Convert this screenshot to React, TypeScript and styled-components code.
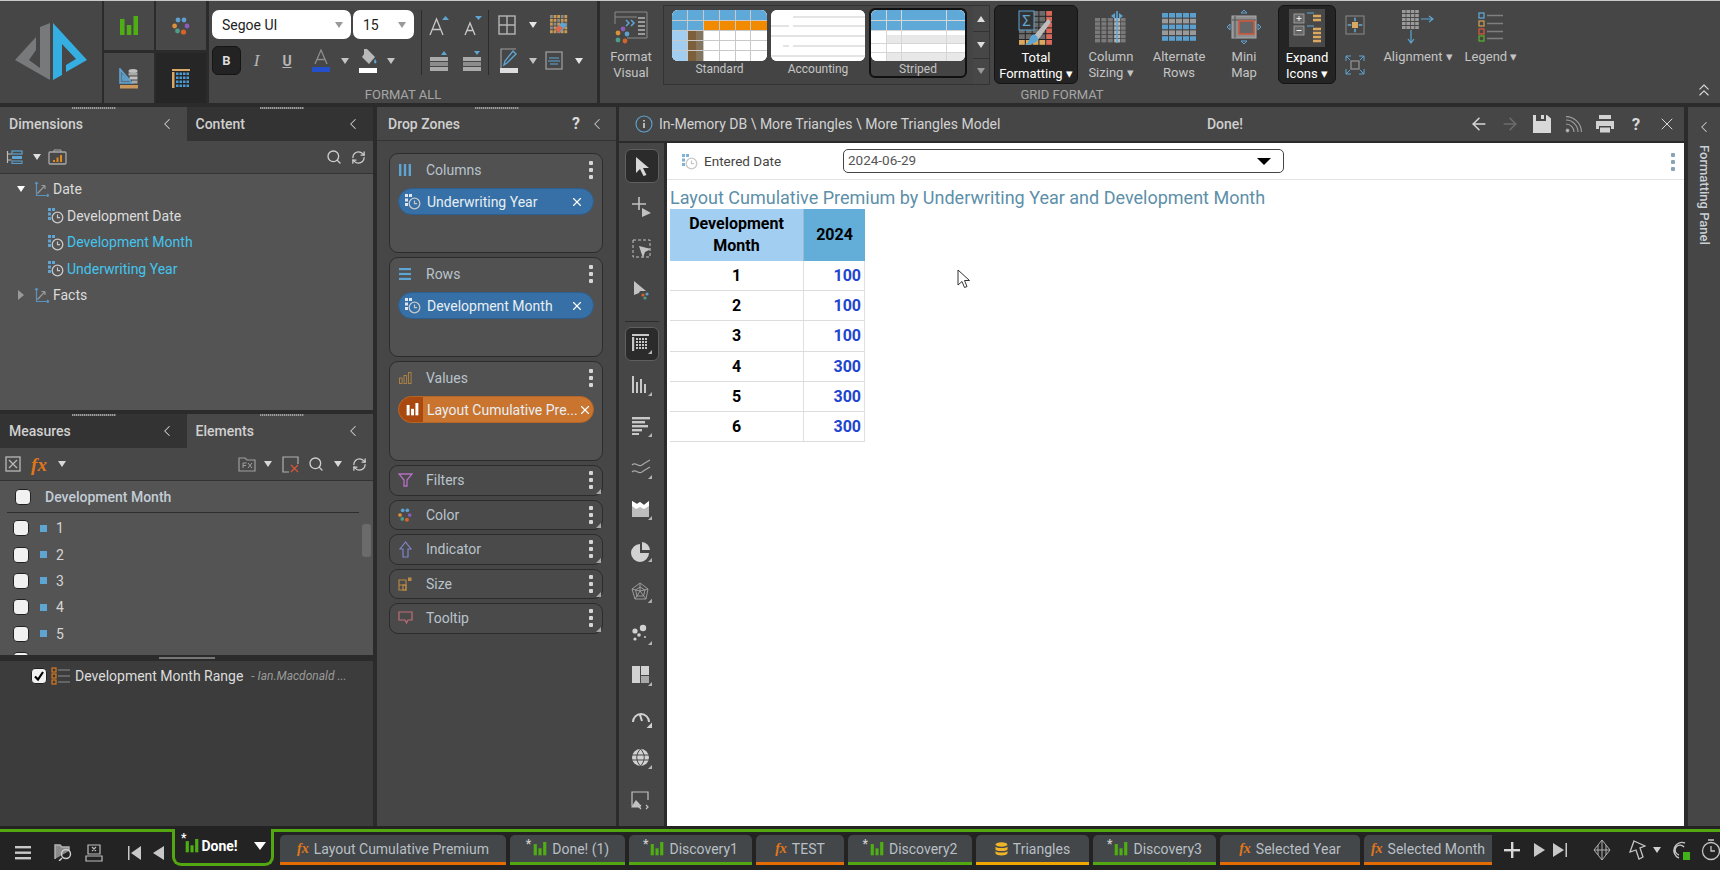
import React from 'react';
import styled, { createGlobalStyle } from 'styled-components';
import { ChevronLeft, ChevronsUp, X, ArrowLeft, ArrowRight, Search, RefreshCw } from 'lucide-react';

const GlobalStyle = createGlobalStyle`
  html, body { margin: 0; padding: 0; background: #2b2b2b; }
  body { font-family: Roboto, "Open Sans", "Liberation Sans", sans-serif; font-size: 14px; color: #ddd; }
  * { box-sizing: border-box; }
  svg { display: block; flex: none; }
`;

const Page = styled.div`
  width: 1720px;
  height: 870px;
  display: flex;
  flex-direction: column;
  overflow: hidden;
  background: #2b2b2b;
  border-top: 1px solid #c9c9c9;
`;

/* ---------- ribbon ---------- */
const Ribbon = styled.div`
  height: 102px;
  display: flex;
  gap: 3px;
  background: #2b2b2b;
  flex: none;
`;
const Logo = styled.div`
  width: 102px;
  background: #464646;
  margin-right: 0;
`;
const TileGrid = styled.div`
  width: 102px;
  display: grid;
  grid-template-columns: 50px 50px;
  grid-template-rows: 49px 50px;
  gap: 3px 2px;
  margin-left: -1px;
`;
const Tile = styled.div<{ $on?: boolean }>`
  background: ${p => (p.$on ? '#262626' : '#484848')};
  display: flex;
  align-items: center;
  justify-content: center;
`;
const Section = styled.div<{ $w?: number }>`
  position: relative;
  background: #464646;
  display: flex;
  flex-direction: column;
  ${p => (p.$w ? `width: ${p.$w}px;` : 'flex: 1;')}
`;
const SectionBody = styled.div`
  height: 85px;
  display: flex;
`;
const SectionLabel = styled.div<{ $w?: number }>`
  font-size: 13px;
  color: #a6a6a6;
  text-align: center;
  line-height: 17px;
  ${p => (p.$w ? `width: ${p.$w}px;` : '')}
`;
const Cluster = styled.div<{ $w: number }>`
  width: ${p => p.$w}px;
  padding-top: 9px;
  display: flex;
  flex-direction: column;
  gap: 7px;
`;
const ClusterRow = styled.div`
  height: 29px;
  display: flex;
  align-items: center;
`;
const VSep = styled.div`
  width: 1px;
  height: 65px;
  margin-top: 9px;
  background: #2c2c2c;
`;
const Cell = styled.div<{ $w: number }>`
  width: ${p => p.$w}px;
  display: flex;
  align-items: center;
  justify-content: center;
  flex: none;
`;
const Combo = styled.div<{ $w: number }>`
  width: ${p => p.$w}px;
  height: 29px;
  background: #fff;
  border-radius: 7px;
  color: #222;
  font-size: 14px;
  display: flex;
  align-items: center;
  justify-content: space-between;
  padding: 0 8px 0 10px;
  margin-right: 2px;
`;
const BoldBtn = styled.div`
  width: 29px;
  height: 29px;
  background: #232323;
  border: 1px solid #151515;
  border-radius: 6px;
  color: #ddd;
  font-weight: 700;
  font-size: 13px;
  display: flex;
  align-items: center;
  justify-content: center;
`;
const Glyph = styled.span<{ $c?: string; $s?: number; $i?: boolean; $u?: boolean }>`
  color: ${p => p.$c || '#b5b5b5'};
  font-size: ${p => p.$s || 15}px;
  font-style: ${p => (p.$i ? 'italic' : 'normal')};
  font-weight: ${p => (p.$u ? 700 : 400)};
  text-decoration: ${p => (p.$u ? 'underline' : 'none')};
  line-height: 1;
`;
const Caret = styled.i<{ $c?: string }>`
  display: block;
  width: 0;
  height: 0;
  border-left: 4px solid transparent;
  border-right: 4px solid transparent;
  border-top: 6px solid ${p => p.$c || '#c4c4c4'};
`;
const RibbonBtn = styled.div<{ $w: number; $on?: boolean }>`
  width: ${p => p.$w}px;
  height: 79px;
  margin-top: 4px;
  display: flex;
  flex-direction: column;
  align-items: center;
  flex: none;
  font-size: 13px;
  line-height: 16px;
  text-align: center;
  color: ${p => (p.$on ? '#fff' : '#c4c4c4')};
  background: ${p => (p.$on ? '#242424' : 'transparent')};
  border-radius: 6px;
  ${p => (p.$on ? 'border: 1px solid #151515;' : '')}
`;
const BtnIcon = styled.div`
  height: 44px;
  display: flex;
  align-items: center;
  justify-content: center;
  flex: none;
`;
const Gallery = styled.div`
  width: 327px;
  height: 80px;
  margin: 4px 4px 0 1px;
  border: 1px solid #333;
  display: flex;
  background: #444;
`;
const GalleryItems = styled.div`
  flex: 1;
  display: flex;
  padding: 2px 4px 0 8px;
  gap: 3px;
`;
const GalleryItem = styled.div<{ $on?: boolean; $w: number }>`
  width: ${p => p.$w}px;
  height: 70px;
  border-radius: 6px;
  display: flex;
  flex-direction: column;
  align-items: center;
  font-size: 12px;
  color: #c4c4c4;
  padding-top: 2px;
  ${p => (p.$on ? 'border: 2px solid #111; padding-top: 0;' : '')}
`;
const ThumbBox = styled.div`
  border-radius: 6px;
  overflow: hidden;
  background: #fff;
  margin-bottom: 1px;
`;
const GalleryScroll = styled.div`
  width: 16px;
  display: flex;
  flex-direction: column;
  gap: 1px;
  background: #333;
`;
const ScrollStep = styled.div`
  flex: 1;
  background: #474747;
  display: flex;
  align-items: center;
  justify-content: center;
`;
const SmallCol = styled.div`
  width: 38px;
  display: flex;
  flex-direction: column;
  align-items: center;
  gap: 20px;
  padding-top: 14px;
`;
const Collapse = styled.div`
  position: absolute;
  right: 6px;
  bottom: 3px;
  color: #d5d5d5;
`;

/* ---------- work area ---------- */
const Work = styled.div`
  height: 719px;
  margin-top: 4px;
  display: flex;
  flex: none;
`;
const LeftCol = styled.div`
  width: 373px;
  display: flex;
  flex-direction: column;
  flex: none;
  margin-right: 4px;
`;
const Panel = styled.div<{ $h: number }>`
  position: relative;
  height: ${p => p.$h}px;
  display: flex;
  flex-direction: column;
  background: #545454;
  flex: none;
`;
const Handle = styled.div<{ $x: number }>`
  position: absolute;
  top: 0;
  left: ${p => p.$x}px;
  width: 44px;
  height: 2px;
  background: repeating-linear-gradient(90deg, #9a9a9a 0 1px, #666 1px 2px);
`;
const Tabs = styled.div`
  height: 34px;
  display: flex;
  flex: none;
`;
const PanelTab = styled.div<{ $on?: boolean }>`
  flex: 1;
  display: flex;
  align-items: center;
  justify-content: space-between;
  padding: 0 11px 0 9px;
  background: ${p => (p.$on ? '#484848' : '#333333')};
  color: #d0d0d0;
  font-size: 14px;
  font-weight: 500;
`;
const ToolRow = styled.div`
  height: 33px;
  display: flex;
  align-items: center;
  background: #484848;
  border-bottom: 1px solid #333;
  padding-right: 2px;
  flex: none;
`;
const Push = styled.div`
  flex: 1;
`;
const Tree = styled.div`
  padding-top: 2px;
`;
const TreeRow = styled.div<{ $blue?: boolean; $child?: boolean }>`
  height: 26.5px;
  display: flex;
  align-items: center;
  font-size: 14px;
  color: ${p => (p.$blue ? '#43c5ee' : '#dcdcdc')};
  padding-left: ${p => (p.$child ? 47 : 16)}px;
  gap: 3px;
`;
const Arrow = styled.div`
  width: 10px;
  margin-right: 5px;
  display: flex;
  justify-content: center;
`;
const RightArrow = styled.i`
  display: block;
  width: 0;
  height: 0;
  border-top: 5px solid transparent;
  border-bottom: 5px solid transparent;
  border-left: 6px solid #9a9a9a;
`;
const Splitter = styled.div`
  position: relative;
  height: 4px;
  flex: none;
`;
const ListHead = styled.div`
  height: 32px;
  margin: 0 14px 0 7px;
  border-bottom: 1px solid #2e2e2e;
  display: flex;
  align-items: center;
  gap: 14px;
  padding-left: 8px;
  font-weight: 500;
  font-size: 14px;
  color: #c3cdd6;
  flex: none;
`;
const ListBody = styled.div`
  position: relative;
  flex: 1;
  overflow: hidden;
  padding-top: 2px;
`;
const ListRow = styled.div`
  height: 26.4px;
  display: flex;
  align-items: center;
  padding-left: 13px;
  color: #d6d6d6;
`;
const Check = styled.div`
  width: 16px;
  height: 16px;
  background: #f1f1f1;
  border: 1px solid #222;
  border-radius: 4px;
  flex: none;
  display: flex;
  align-items: center;
  justify-content: center;
`;
const Member = styled.i`
  display: block;
  width: 7px;
  height: 7px;
  margin: 0 9px 0 11px;
  background: #5ea5d3;
`;
const ScrollThumb = styled.div`
  position: absolute;
  right: 2px;
  top: 11px;
  width: 9px;
  height: 33px;
  background: #6b6b6b;
  border-radius: 3px;
`;
const SplitBar = styled.div`
  position: relative;
  height: 6px;
  background: #2b2b2b;
  flex: none;
  &::after {
    content: '';
    position: absolute;
    left: 159px;
    top: 2px;
    width: 56px;
    height: 2px;
    background: #777;
  }
`;
const SavedPanel = styled.div`
  flex: 1;
  background: #3c3c3c;
  padding: 5px 0 0 31px;
`;
const SavedRow = styled.div`
  height: 20px;
  display: flex;
  align-items: center;
  gap: 4px;
  color: #dcdcdc;
  font-size: 14px;
  white-space: nowrap;
`;
const SavedOwner = styled.span`
  font-style: italic;
  font-size: 12px;
  color: #9a9a9a;
  margin-left: 4px;
`;

const DropPanel = styled.div`
  position: relative;
  width: 239px;
  background: #464646;
  display: flex;
  flex-direction: column;
  flex: none;
  margin-right: 3px;
`;
const DropHead = styled.div`
  height: 34px;
  display: flex;
  align-items: center;
  padding: 0 10px 0 11px;
  border-bottom: 1px solid #333;
  color: #d0d0d0;
  font-weight: 500;
  flex: none;
`;
const DropList = styled.div`
  padding: 12px 13px 0 12px;
  display: flex;
  flex-direction: column;
  gap: 4px;
`;
const DropBox = styled.div<{ $tall?: boolean }>`
  position: relative;
  height: ${p => (p.$tall ? 100 : 30.5)}px;
  background: ${p => (p.$tall ? '#515151' : '#4a4a4a')};
  border: 1px solid #2c2c2c;
  border-radius: 9px;
  padding: ${p => (p.$tall ? '0 8px' : '0')};
  ${p =>
    p.$tall
      ? ''
      : `&::after {
    content: '';
    position: absolute;
    right: 1px;
    bottom: 1px;
    width: 0;
    height: 0;
    border-left: 5px solid transparent;
    border-bottom: 5px solid #a8a8a8;
  }`}
`;
const DropTitle = styled.div<{ $tall?: boolean }>`
  height: ${p => (p.$tall ? 30 : 28.5)}px;
  display: flex;
  align-items: center;
  color: #b9c3cc;
  padding: ${p => (p.$tall ? '0' : '0 8px')};
  margin-top: ${p => (p.$tall ? 1 : 0)}px;
`;
const DropIcon = styled.div`
  width: 28px;
  display: flex;
  justify-content: center;
  margin-right: 7px;
  margin-left: -1px;
`;
const Kebab = styled.div`
  margin-left: auto;
  display: flex;
  flex-direction: column;
  gap: 3px;
  margin-right: 1px;
  & > i {
    display: block;
    width: 4px;
    height: 4px;
    background: #d6d6d6;
    border-radius: 1px;
  }
`;
const Pill = styled.div<{ $orange?: boolean }>`
  height: 27px;
  margin-top: 3px;
  border-radius: 14px;
  background: ${p => (p.$orange ? '#c9752f' : '#3670a6')};
  border: 1px solid ${p => (p.$orange ? '#b56526' : '#2d5f8e')};
  display: flex;
  align-items: center;
  color: #e8eef3;
  font-size: 14px;
  overflow: hidden;
  padding-right: 9px;
  white-space: nowrap;
`;
const PillIcon = styled.div<{ $orange?: boolean }>`
  width: 24px;
  height: 100%;
  background: ${p => (p.$orange ? '#a9490f' : 'transparent')};
  display: flex;
  align-items: center;
  justify-content: center;
  margin-right: 4px;
  flex: none;
  padding-left: 3px;
`;
const PillText = styled.span`
  flex: 1;
`;

const Main = styled.div`
  width: 1065px;
  display: flex;
  flex-direction: column;
  flex: none;
  margin-right: 4px;
`;
const MainHead = styled.div`
  height: 34px;
  background: #464646;
  display: flex;
  align-items: center;
  padding-left: 16px;
  flex: none;
`;
const Crumb = styled.div`
  width: 544px;
  display: flex;
  align-items: center;
  gap: 6px;
  color: #d2d2d2;
  font-size: 14px;
  white-space: nowrap;
`;
const HeadDone = styled.div`
  width: 92px;
  text-align: center;
  font-weight: 500;
  color: #cfcfcf;
  font-size: 14px;
`;
const HeadTools = styled.div`
  margin-left: auto;
  display: flex;
  align-items: center;
  padding-right: 1px;
`;
const HeadBtn = styled.div<{ $dim?: boolean }>`
  width: 31.4px;
  display: flex;
  justify-content: center;
  color: ${p => (p.$dim ? '#6d6d6d' : '#d8d8d8')};
  font-weight: 700;
  font-size: 17px;
`;
const MainBody = styled.div`
  flex: 1;
  margin-top: 2px;
  display: flex;
  min-height: 0;
`;
const VTools = styled.div`
  width: 45px;
  margin-right: 3px;
  background: #464646;
  display: flex;
  flex-direction: column;
  align-items: center;
  padding-top: 2px;
  flex: none;
`;
const VBtn = styled.div<{ $on?: boolean }>`
  position: relative;
  width: 34px;
  height: 41.5px;
  display: flex;
  align-items: center;
  justify-content: center;
  flex: none;
  ${p =>
    p.$on
      ? `&::before {
    content: '';
    position: absolute;
    left: 0; right: 0; top: 4px; bottom: 4px;
    background: #2b2b2b;
    border: 1px solid #5f5f5f;
    border-radius: 6px;
  }
  & > svg { position: relative; }`
      : ''}
`;
const VDivider = styled.div`
  width: 34px;
  height: 11px;
  flex: none;
  border-bottom: 1px solid #2c2c2c;
  margin-bottom: 1px;
`;
const Canvas = styled.div`
  position: relative;
  flex: 1;
  background: #fff;
`;
const FilterBar = styled.div`
  position: relative;
  height: 37px;
  border-bottom: 1px solid #e4e4e4;
  display: flex;
  align-items: center;
  padding-left: 14px;
  color: #444;
  font-size: 13.5px;
`;
const FilterLabel = styled.div`
  width: 139px;
  margin-left: 6px;
`;
const DateSelect = styled.div`
  width: 441px;
  height: 24px;
  border: 1px solid #444;
  border-radius: 5px;
  display: flex;
  align-items: center;
  justify-content: space-between;
  padding: 0 12px 2px 4px;
  color: #555;
  font-size: 13.5px;
`;
const BlackCaret = styled.i`
  display: block;
  width: 0;
  height: 0;
  border-left: 7px solid transparent;
  border-right: 7px solid transparent;
  border-top: 7px solid #000;
  margin-top: 2px;
`;
const GreyKebab = styled(Kebab)`
  position: absolute;
  right: 8px;
  top: 10px;
  & > i {
    background: #8aa3b5;
  }
`;
const ReportTitle = styled.div`
  padding: 8px 0 0 3px;
  color: #5d8fa9;
  font-size: 18px;
  line-height: 20px;
  white-space: nowrap;
`;
const PivotTable = styled.div`
  width: 195px;
  margin: 1px 0 0 3px;
  display: grid;
  grid-template-columns: 133px 62px;
`;
const PivotHead = styled.div<{ $dark?: boolean }>`
  height: 52px;
  background: ${p => (p.$dark ? '#62aed9' : '#a2cef1')};
  color: #000;
  font-weight: 700;
  font-size: 16px;
  line-height: 22px;
  text-align: center;
  display: flex;
  align-items: center;
  justify-content: center;
  ${p => (p.$dark ? 'border-left: 1px solid #9fbacc;' : '')}
`;
const PivotCell = styled.div<{ $value?: boolean }>`
  height: 30.2px;
  display: flex;
  align-items: center;
  justify-content: ${p => (p.$value ? 'flex-end' : 'center')};
  padding-right: ${p => (p.$value ? 3 : 0)}px;
  border-bottom: 1px solid #dcdcdc;
  ${p => (p.$value ? 'border-left: 1px solid #e0e0e0; border-right: 1px solid #e0e0e0;' : '')}
  color: ${p => (p.$value ? '#2145cf' : '#000')};
  font-weight: 700;
  font-size: 16px;
`;
const Pointer = styled.div`
  position: absolute;
  left: 290px;
  top: 126px;
`;
const SidePanel = styled.div`
  width: 32px;
  background: #464646;
  display: flex;
  flex-direction: column;
  align-items: center;
  padding-top: 11px;
  flex: none;
`;
const SideText = styled.div`
  writing-mode: vertical-rl;
  margin-top: 9px;
  font-size: 13px;
  font-weight: 500;
  color: #c8d0d6;
  white-space: nowrap;
`;

/* ---------- bottom tabs ---------- */
const Footer = styled.div`
  flex: 1;
  display: flex;
  padding-top: 3px;
  background: #232323;
  min-height: 0;
`;
const FootLeft = styled.div`
  width: 172px;
  border-top: 3px solid #53a710;
  display: flex;
  align-items: center;
  padding-top: 3px;
  flex: none;
`;
const ActiveTab = styled.div`
  width: 102px;
  height: 37px;
  border: 3px solid #53a710;
  border-top: 0;
  border-radius: 0 0 9px 9px;
  display: flex;
  align-items: center;
  padding: 0 5px 0 6px;
  gap: 2px;
  color: #fff;
  font-weight: 700;
  font-size: 14px;
  flex: none;
`;
const FootRest = styled.div`
  flex: 1;
  border-top: 3px solid #53a710;
  display: flex;
  padding-top: 3px;
  padding-left: 6px;
  min-width: 0;
`;
const SheetTabs = styled.div`
  display: flex;
  gap: 4px;
  flex: none;
`;
const SheetTab = styled.div<{ $w: number; $c: string; $clip?: boolean }>`
  width: ${p => p.$w}px;
  height: 30px;
  background: #43474a;
  border-radius: ${p => (p.$clip ? '5px 0 0 0' : '5px 5px 0 0')};
  border-bottom: 3px solid ${p => p.$c};
  display: flex;
  align-items: center;
  justify-content: center;
  gap: 5px;
  color: #b9bfc4;
  font-size: 14px;
  white-space: nowrap;
  overflow: hidden;
`;
const Star = styled.span<{ $bright?: boolean }>`
  color: ${p => (p.$bright ? '#fff' : '#cfcfcf')};
  font-size: 12px;
  font-weight: 700;
  align-self: flex-start;
  margin: 2px -3px 0 0;
`;
const Fx = styled.span<{ $s?: number }>`
  font-family: 'Liberation Serif', serif;
  font-style: italic;
  font-weight: 700;
  font-size: ${p => p.$s || 14}px;
  color: #e2771a;
  line-height: 1;
`;
const FootTools = styled.div`
  display: flex;
  align-items: center;
  height: 30px;
  flex: none;
`;

/* ---------- icons ---------- */
const blue = '#5ea5d3';
const Bars = ({ c = '#4fae14', s = 20 }: { c?: string; s?: number }) => (
  <svg width={s} height={s} viewBox="0 0 20 20" fill={c}>
    <rect x="1" y="3" width="4.5" height="16" />
    <rect x="7.8" y="9" width="4.5" height="10" />
    <rect x="14.5" y="0" width="4.5" height="19" />
  </svg>
);
const Dots = ({ s = 18 }: { s?: number }) => (
  <svg width={s} height={s} viewBox="0 0 18 18">
    <circle cx="6" cy="3" r="2.4" fill="#5e9fd0" />
    <circle cx="12" cy="3" r="2.4" fill="#5e9fd0" />
    <circle cx="2.6" cy="9" r="2.4" fill="#d9913a" />
    <circle cx="15" cy="9" r="2.4" fill="#8a5dbb" />
    <circle cx="5.5" cy="14" r="2.4" fill="#4d9e88" />
    <circle cx="11.5" cy="15" r="2.6" fill="#d6632a" />
  </svg>
);
const TimeDim = ({ c = blue, s = 17 }: { c?: string; s?: number }) => (
  <svg width={s} height={s} viewBox="0 0 17 17" fill="none">
    <rect x="1" y="1" width="3" height="3" fill={c} />
    <rect x="5" y="1" width="3" height="3" fill={c} />
    <rect x="1" y="5.5" width="3" height="3" fill={c} />
    <rect x="1" y="10" width="3" height="3" fill={c} />
    <circle cx="10.5" cy="10.5" r="5.3" stroke="#c8c8c8" strokeWidth="1.3" />
    <path d="M10.5 7.5v3.2h2.6" stroke="#c8c8c8" strokeWidth="1.2" />
  </svg>
);
const Axes = () => (
  <svg width="16" height="16" viewBox="0 0 16 16" fill="none" stroke="#5a93bd" strokeWidth="1.2">
    <path d="M2.5 1v13.5H15M2.5 1L1 3M2.5 1L4 3M15 14.5l-2-1.5M15 14.5L13 16" />
    <path d="M3.5 12.5L11 4.5M11 4.5H7.5M11 4.5V8" stroke="#999" />
  </svg>
);
const FieldList = ({ c = '#d9791e' }: { c?: string }) => (
  <svg width="20" height="18" viewBox="0 0 20 18" fill="none">
    <rect x="1" y="1" width="4" height="4" stroke={c} strokeWidth="1.2" />
    <rect x="1" y="7" width="4" height="4" stroke={c} strokeWidth="1.2" />
    <rect x="1" y="13" width="4" height="4" stroke={c} strokeWidth="1.2" />
    <path d="M7 3h12M7 9h12M7 15h12" stroke="#8b8b8b" strokeWidth="1.2" />
  </svg>
);
const CheckMark = () => (
  <svg width="12" height="12" viewBox="0 0 12 12" fill="none" stroke="#000" strokeWidth="2.2">
    <path d="M2 6.5l3 3 5-7.5" />
  </svg>
);

const SetSquare = () => (
  <svg width="20" height="21" viewBox="0 0 20 21" fill="none">
    <path d="M1 1L1 15H13Z M4 8v4h4Z" stroke="#5ea5d3" strokeWidth="1.6" fill="#6f9ec0" fillOpacity="0.5" />
    <rect x="1" y="17" width="18" height="3.5" fill="#c9975c" />
    <ellipse cx="14" cy="3" rx="4.5" ry="2" fill="#c0c0c0" />
    <rect x="9.5" y="4.5" width="9" height="3" fill="#a8a8a8" />
    <rect x="10.5" y="8.5" width="8" height="3" fill="#c0c0c0" />
    <rect x="13" y="12.5" width="5.5" height="3" fill="#a8a8a8" />
  </svg>
);
const GridTile = () => (
  <svg width="18" height="19" viewBox="0 0 18 19">
    <rect x="0" y="3" width="2.5" height="16" fill="#d8a867" />
    <rect x="0" y="0" width="18" height="2" fill="#d8a867" />
    {[4, 8, 12, 16].flatMap(y =>
      [4, 7.5, 11, 14.5].map(x => <rect key={`${x}-${y}`} x={x} y={y - 0.5} width="2.5" height="2.5" fill="#4a9bd1" />),
    )}
  </svg>
);
const LetterSize = ({ up }: { up?: boolean }) => (
  <svg width="22" height="22" viewBox="0 0 22 22" fill="none">
    <path d={up ? 'M2 21L8.5 5 15 21M4.5 15.5h8' : 'M4 21L9 9l5 12M6 16.5h6'} stroke="#c9c9c9" strokeWidth="1.3" />
    <path d={up ? 'M14 6l3.5-4 3.5 4Z' : 'M14 2h7l-3.5 4Z'} fill="#5ea5d3" />
  </svg>
);
const RowHeight = ({ up }: { up?: boolean }) => (
  <svg width="20" height="22" viewBox="0 0 20 22">
    <path d={up ? 'M12 5l3-4 3 4Z' : 'M12 1h6l-3 4Z'} fill="#5ea5d3" />
    <rect x="1" y="7" width="18" height="4" fill="#aaa" />
    <rect x="1" y="12" width="18" height="4" fill="#8c8c8c" />
    <rect x="1" y="17" width="18" height="4" fill="#aaa" />
  </svg>
);
const FontColor = () => (
  <svg width="20" height="24" viewBox="0 0 20 24" fill="none">
    <path d="M4 15L10 1l6 14M6 10.5h8" stroke="#8d8d8d" strokeWidth="1.3" />
    <rect x="1" y="18" width="18" height="5" fill="#2450cc" />
  </svg>
);
const FillColor = () => (
  <svg width="20" height="26" viewBox="0 0 20 26">
    <path d="M6 1h3l8 8-6 7-7-7 2-3Z" fill="#b9b9b9" />
    <path d="M17 11c1.5 2 2 3 1 4s-2 0-2-1 .5-2 1-3Z" fill="#5ea5d3" />
    <rect x="1" y="20" width="18" height="5" fill="#fff" />
  </svg>
);
const BorderGrid = () => (
  <svg width="18" height="20" viewBox="0 0 18 20" fill="none" stroke="#b5b5b5" strokeWidth="1.4">
    <rect x="1" y="1" width="16" height="18" />
    <path d="M9 1v18M1 10h16" />
  </svg>
);
const ClearFormat = () => (
  <svg width="18" height="19" viewBox="0 0 18 19">
    {[0, 1, 2, 3, 4].flatMap(r =>
      [0, 1, 2, 3, 4].map(c => (
        <rect key={`${r}-${c}`} x={c * 3.6} y={r * 3.8} width="2.8" height="3" fill={(r + c) % 3 ? '#c99a55' : '#8a8a8a'} />
      )),
    )}
    <path d="M5 14l7-7 5 3-7 8Z" fill="#5ea5d3" />
    <path d="M5 14l4-4 4 3-4 5Z" fill="#d9674f" />
  </svg>
);
const PencilBox = () => (
  <svg width="18" height="25" viewBox="0 0 18 25" fill="none">
    <path d="M1 20V1h15" stroke="#9b9b9b" strokeWidth="1.2" />
    <path d="M4 17l1-4L13 3l3 3-9 9Z" stroke="#5ea5d3" strokeWidth="1.4" />
    <rect x="0" y="20" width="18" height="5" fill="#ddd" />
  </svg>
);
const AlignBox = () => (
  <svg width="18" height="19" viewBox="0 0 18 19" fill="none">
    <rect x="1" y="1" width="16" height="17" stroke="#9b9b9b" strokeWidth="1.3" />
    <path d="M4 7h10M3 10h12M5 13h8" stroke="#5ea5d3" strokeWidth="1.2" />
  </svg>
);
const FormatVisual = () => (
  <svg width="34" height="34" viewBox="0 0 34 34" fill="none">
    <path d="M1 2h32v26H13" stroke="#8a8a8a" strokeWidth="1" />
    <path d="M1 2v12M1 7h22" stroke="#8a8a8a" strokeWidth="1" />
    <path d="M12 10l3 3-3 3M17 10l3 3-3 3" stroke="#5ea5d3" strokeWidth="1.5" />
    <path d="M24 8h7M24 12h7M24 16h7M24 20h7M24 24h7" stroke="#9a9a9a" strokeWidth="2" />
    <circle cx="9" cy="19" r="2.4" fill="#8a5dbb" />
    <circle cx="4" cy="23" r="2.4" fill="#d9913a" />
    <circle cx="13" cy="24" r="2.4" fill="#5e9fd0" />
    <circle cx="4" cy="30" r="2.4" fill="#4d9e88" />
    <circle cx="11" cy="31" r="2.4" fill="#d6632a" />
  </svg>
);
const TotalFormat = () => (
  <svg width="36" height="36" viewBox="0 0 36 36">
    {[0, 1, 2, 3, 4, 5].flatMap(r =>
      [0, 1, 2, 3, 4].map(c => (
        <rect
          key={`${r}-${c}`}
          x={1 + c * 6.8}
          y={1 + r * 5.8}
          width="5.8"
          height="4.8"
          fill={c === 4 ? '#d8695a' : r === 5 ? '#dba860' : '#6c6c6c'}
        />
      )),
    )}
    <rect x="1" y="1" width="15" height="19" fill="#333" stroke="#5ea5d3" strokeWidth="1" />
    <text x="8.5" y="16" textAnchor="middle" fontSize="15" fill="#5ea5d3">Σ</text>
    <path d="M14 28l16-19 3 3-13 18Z" fill="#bdbdbd" />
    <path d="M14 25c4-1 6 1 6 5-3 4-9 5-13 5 4-2 4-7 7-10Z" fill="#5ea5d3" />
  </svg>
);
const ColumnSizing = () => (
  <svg width="32" height="32" viewBox="0 0 32 32">
    {[0, 1, 2, 3, 4, 5].flatMap(r =>
      [0, 1, 2, 3, 4].map(c => (
        <rect key={`${r}-${c}`} x={c * 6.4} y={7 + r * 4.2} width={c === 3 ? 5.8 : 5} height="3.4" fill={c === 3 ? '#b5b5b5' : '#7a7a7a'} />
      )),
    )}
    <path d="M22 0v32" stroke="#5ea5d3" strokeWidth="1.6" />
    <path d="M20 2v6l-4-3ZM24 2v6l4-3Z" fill="#5ea5d3" />
  </svg>
);
const AlternateRows = () => (
  <svg width="34" height="28" viewBox="0 0 34 28">
    {[0, 1, 2, 3, 4].flatMap(r =>
      [0, 1, 2, 3, 4].map(c => (
        <rect key={`${r}-${c}`} x={c * 7} y={r * 5.8} width="6" height="4.6" fill={r % 2 ? '#9a9a9a' : '#5b9fce'} />
      )),
    )}
  </svg>
);
const MiniMap = () => (
  <svg width="36" height="36" viewBox="0 0 36 36" fill="none">
    <path d="M18 1l-3 3h6ZM18 35l-3-3h6ZM1 18l3-3v6ZM35 18l-3-3v6Z" stroke="#5ea5d3" strokeWidth="1" />
    <rect x="6" y="7" width="24" height="22" fill="#8e8e8e" stroke="#aaa" />
    <path d="M6 11h24M9 7v22" stroke="#555" strokeWidth="1" />
    <rect x="13" y="12" width="15" height="13" fill="#666" stroke="#d4563a" strokeWidth="1.5" />
  </svg>
);
const ExpandIcons = () => (
  <svg width="36" height="38" viewBox="0 0 36 38">
    <rect x="0" y="0" width="36" height="38" fill="#484848" />
    <rect x="5" y="5" width="10" height="9" fill="#666" stroke="#aaa" strokeWidth="0.8" />
    <path d="M7.5 9.5h5M10 7v5" stroke="#eee" strokeWidth="1" />
    <rect x="5" y="17" width="10" height="9" fill="#666" stroke="#aaa" strokeWidth="0.8" />
    <path d="M7.5 21.5h5" stroke="#eee" strokeWidth="1" />
    <path d="M18 4h7M18 17h7" stroke="#5ea5d3" strokeWidth="1.2" />
    <path d="M24 7h8M24 11h8M24 20h8M24 24h8M24 28h8M24 32h8" stroke="#dba860" strokeWidth="2.4" />
  </svg>
);
const FitSmall = () => (
  <svg width="20" height="20" viewBox="0 0 20 20" fill="none">
    <rect x="1" y="1" width="18" height="18" stroke="#8a8a8a" strokeWidth="1" />
    <path d="M10 1v18M1 10h18" stroke="#6d6d6d" />
    <rect x="7" y="7" width="6" height="6" fill="#dba860" />
    <path d="M3 10h3M17 10h-3M10 3v3M10 17v-3" stroke="#5ea5d3" strokeWidth="1.5" />
  </svg>
);
const ExpandSmall = () => (
  <svg width="20" height="20" viewBox="0 0 20 20" fill="none">
    <rect x="6" y="6" width="8" height="8" stroke="#8a8a8a" strokeWidth="1.4" />
    <path d="M1 6V1h5M1 1l4 4M19 6V1h-5M19 1l-4 4M1 14v5h5M1 19l4-4M19 14v5h-5M19 19l-4-4" stroke="#5ea5d3" strokeWidth="1" />
  </svg>
);
const Alignment = () => (
  <svg width="32" height="34" viewBox="0 0 32 34">
    {[0, 1, 2, 3, 4].flatMap(r =>
      [0, 1, 2, 3].map(c => <rect key={`${r}-${c}`} x={c * 4.4} y={r * 4} width="3.6" height="3" fill="#9a9a9a" />),
    )}
    <path d="M19 9h12M27 6l4 3-4 3M9 20v13M6 29l3 4 3-4" fill="none" stroke="#5ea5d3" strokeWidth="1.2" />
  </svg>
);
const Legend = () => (
  <svg width="26" height="30" viewBox="0 0 26 30" fill="none" strokeWidth="1.3">
    <rect x="1" y="1" width="5" height="5" stroke="#5ea5d3" />
    <rect x="1" y="9" width="5" height="5" stroke="#c99a55" />
    <rect x="1" y="17" width="5" height="5" stroke="#d4563a" />
    <rect x="1" y="24" width="5" height="5" stroke="#56ad2e" />
    <path d="M9 3.5h16M9 11.5h16M9 19.5h16M9 26.5h16" stroke="#7f7f7f" />
  </svg>
);

const gridLines = (x: number[], y: number[], w: number, h: number, c = '#c9c9c9') => (
  <>
    {x.map(v => <rect key={`x${v}`} x={v} y="0" width="1" height={h} fill={c} />)}
    {y.map(v => <rect key={`y${v}`} x="0" y={v} width={w} height="1" fill={c} />)}
  </>
);
const ThumbStandard = () => (
  <svg width="95" height="51" viewBox="0 0 95 51">
    <rect width="95" height="51" fill="#fff" />
    <rect width="95" height="20" fill="#5fa9d8" />
    <rect x="31" y="10" width="64" height="10" fill="#f28a00" />
    <rect y="20" width="31" height="31" fill="#a0cdf0" />
    <rect x="16" y="20" width="8" height="31" fill="#7d5f3a" />
    <rect x="24" y="20" width="7" height="31" fill="#7d5f3a" opacity="0.8" />
    {gridLines([15, 31, 47, 63, 78], [10, 20, 30, 40], 95, 51)}
  </svg>
);
const ThumbAccounting = () => (
  <svg width="94" height="51" viewBox="0 0 94 51">
    <rect width="94" height="51" fill="#fff" />
    <path d="M22 7h72M0 16h18M22 16h72M0 26h94M12 36h6M22 36h72M0 46h94" stroke="#c9c9c9" strokeWidth="1" />
  </svg>
);
const ThumbStriped = () => (
  <svg width="94" height="51" viewBox="0 0 94 51">
    <rect width="94" height="51" fill="#fff" />
    <rect width="94" height="20" fill="#5fa9d8" />
    <rect y="25" x="15" width="79" height="8" fill="#e8e8e8" />
    <rect y="42" x="15" width="79" height="9" fill="#e8e8e8" />
    {gridLines([15, 30, 75], [10, 20, 33, 42], 94, 51, '#d6d6d6')}
  </svg>
);
const Hier = () => (
  <svg width="17" height="14" viewBox="0 0 17 14" fill="none">
    <path d="M1.5 1v12M1.5 4h4M1.5 10h4" stroke="#bcbcbc" strokeWidth="1.2" />
    <rect x="6" y="1" width="10" height="3" stroke="#5ea5d3" strokeWidth="1.2" />
    <rect x="6" y="6" width="10" height="3" fill="#5ea5d3" />
    <rect x="6" y="11" width="10" height="2.4" stroke="#5ea5d3" strokeWidth="1" />
  </svg>
);
const Briefcase = () => (
  <svg width="19" height="16" viewBox="0 0 19 16" fill="none">
    <rect x="1" y="3" width="17" height="12" rx="1" stroke="#a8a8a8" strokeWidth="1.3" />
    <path d="M6 3V1h7v2" stroke="#a8a8a8" />
    <path d="M6 13v-2M9.5 13V8.5M13 13V6" stroke="#e28a1c" strokeWidth="2" />
  </svg>
);
const BoxX = () => (
  <svg width="16" height="16" viewBox="0 0 16 16" fill="none" stroke="#b8b8b8" strokeWidth="1.3">
    <rect x="1" y="1" width="14" height="14" />
    <path d="M4 4l8 8M12 4l-8 8" />
  </svg>
);
const FxFolder = () => (
  <svg width="18" height="15" viewBox="0 0 18 15" fill="none">
    <path d="M1 14V1h6l2 2h8v11Z" stroke="#9e9e9e" strokeWidth="1.2" />
    <path d="M5 11V6h3.5M5 8.5h3M10 6l4 5M14 6l-4 5" stroke="#9e9e9e" strokeWidth="1" />
  </svg>
);
const DashX = () => (
  <svg width="17" height="17" viewBox="0 0 17 17" fill="none">
    <path d="M1 11V1h15v7M1 11v5h6" stroke="#b0b0b0" strokeWidth="1.2" />
    <path d="M9 9l7 7M16 9l-7 7" stroke="#d4563a" strokeWidth="1.3" />
  </svg>
);
const ColumnsIcon = () => (
  <svg width="12" height="12" viewBox="0 0 12 12" fill={blue}>
    <rect x="0" width="2.4" height="12" /><rect x="4.8" width="2.4" height="12" /><rect x="9.6" width="2.4" height="12" />
  </svg>
);
const RowsIcon = () => (
  <svg width="12" height="12" viewBox="0 0 12 12" fill={blue}>
    <rect y="0" width="12" height="2.2" /><rect y="4.9" width="12" height="2.2" /><rect y="9.8" width="12" height="2.2" />
  </svg>
);
const ValuesIcon = () => (
  <svg width="13" height="12" viewBox="0 0 13 12" fill="none" stroke="#a97f45" strokeWidth="1">
    <rect x="0.5" y="6" width="2.6" height="5.5" /><rect x="5" y="3.5" width="2.6" height="8" /><rect x="9.5" y="0.5" width="2.6" height="11" />
  </svg>
);
const FilterIcon = () => (
  <svg width="15" height="14" viewBox="0 0 15 14" fill="none" stroke="#b66fc4" strokeWidth="1.3">
    <path d="M1 1h13L9 7v6H6V7Z" />
  </svg>
);
const IndicatorIcon = () => (
  <svg width="13" height="17" viewBox="0 0 13 17" fill="none" stroke="#7d86c9" strokeWidth="1.2">
    <path d="M6.5 1L1 8h3v8h5V8h3Z" />
  </svg>
);
const SizeIcon = () => (
  <svg width="14" height="14" viewBox="0 0 14 14" fill="none" stroke="#bb8a45" strokeWidth="1.1">
    <path d="M1 3h7v10H1ZM1 8h7v5" />
    <path d="M5 8h3v5H5Z" />
    <rect x="10" y="0.5" width="3.5" height="3.5" fill="#bb8a45" stroke="none" />
  </svg>
);
const TooltipIcon = () => (
  <svg width="15" height="14" viewBox="0 0 15 14" fill="none" stroke="#bf6f78" strokeWidth="1.2">
    <path d="M1 1h13v8H10l-1.5 3L7 9H1Z" />
  </svg>
);
const Info = () => (
  <svg width="18" height="18" viewBox="0 0 18 18" fill="none">
    <circle cx="9" cy="9" r="8" stroke="#5ea5d3" strokeWidth="1.1" />
    <path d="M9 8v5M9 5v1.6" stroke="#ddd" strokeWidth="1.5" />
  </svg>
);
const Save = () => (
  <svg width="18" height="18" viewBox="0 0 18 18" fill="#d8d8d8">
    <path d="M0 0h3v6h10V0h1l4 3.5V18H0Z" />
    <rect x="8" y="0" width="3" height="4" />
  </svg>
);
const Rss = () => (
  <svg width="17" height="17" viewBox="0 0 17 17" fill="none" stroke="#a0a0a0" strokeWidth="1.1">
    <circle cx="2.5" cy="14.5" r="1.4" fill="#c9c9c9" />
    <path d="M1 8a8 8 0 0 1 8 8M1 4a12 12 0 0 1 12 12M1 0.6a15.4 15.4 0 0 1 15.4 15.4" />
  </svg>
);
const PrintIcon = () => (
  <svg width="18" height="18" viewBox="0 0 18 18" fill="#d2d2d2">
    <rect x="3" y="0" width="12" height="4" />
    <path d="M0 6h18v8h-3v-3H3v3H0Z" />
    <rect x="4" y="12.5" width="10" height="5" />
  </svg>
);

const tri = <path d="M21 21h-4l4-4Z" fill="#b5b5b5" />;
const vIcons: { key: string; on?: boolean; node: React.ReactNode }[] = [
  { key: 'select', on: true, node: <svg width="18" height="20" viewBox="0 0 18 20" fill="#d8d8d8"><path d="M3 1l13 11h-6l3.5 7-3 1L7 13l-4 4Z" /></svg> },
  { key: 'add', node: <svg width="20" height="20" viewBox="0 0 20 20"><path d="M7 0v13M0 7h14" stroke="#c2c2c2" strokeWidth="1.6" /><path d="M10 11l9 5-9 4Z" fill="#c2c2c2" /></svg> },
  { key: 'marquee', node: <svg width="20" height="20" viewBox="0 0 20 20"><rect x="1" y="1" width="17" height="17" fill="none" stroke="#c2c2c2" strokeDasharray="3 2" /><path d="M7 7l12 3-6 3-2 6Z" fill="#c2c2c2" /></svg> },
  { key: 'color', node: <svg width="18" height="20" viewBox="0 0 18 20"><path d="M1 1l12 10H7l-1 2-5 2Z" fill="#c2c2c2" /><circle cx="10" cy="15" r="1.6" fill="#d6632a" /><circle cx="14" cy="14" r="1.6" fill="#5e9fd0" /><circle cx="12" cy="18" r="1.6" fill="#4d9e88" /></svg> },
  { key: 'divider', node: null },
  { key: 'grid', on: true, node: <svg width="21" height="21" viewBox="0 0 21 21" fill="#c8c8c8"><rect x="1" y="1" width="17" height="2" /><rect x="1" y="4" width="2.2" height="14" />{[5, 8, 11, 14].flatMap(y => [5, 8, 11, 14].map(x => <rect key={`${x}${y}`} x={x} y={y} width="2" height="2" />))}{tri}</svg> },
  { key: 'bars', node: <svg width="21" height="21" viewBox="0 0 21 21" fill="#c8c8c8"><rect x="1" y="1" width="2" height="17" /><rect x="5" y="7" width="2" height="11" /><rect x="9" y="4" width="2" height="14" /><rect x="13" y="9" width="2" height="9" />{tri}</svg> },
  { key: 'hbars', node: <svg width="21" height="21" viewBox="0 0 21 21" fill="#c8c8c8"><rect x="1" y="1" width="18" height="2.4" /><rect x="1" y="5" width="13" height="2.4" /><rect x="1" y="9" width="16" height="2.4" /><rect x="1" y="13" width="10" height="2.4" /><rect x="1" y="17" width="7" height="2" />{tri}</svg> },
  { key: 'wave', node: <svg width="21" height="21" viewBox="0 0 21 21" fill="none" stroke="#a8a8a8" strokeWidth="1.2"><path d="M1 7c4-4 6 3 10 0s5-3 8-5M1 14c4-4 6 3 10 0s5-3 8-5" /><path d="M21 21h-4l4-4Z" fill="#b5b5b5" stroke="none" /></svg> },
  { key: 'area', node: <svg width="21" height="21" viewBox="0 0 21 21" fill="#c8c8c8"><path d="M1 2l5 3 3-2 4 3 5-4v16H1Z" fill="#bdbdbd" /><path d="M1 2l5 3 3-2 4 3 5-4v5l-5 3-4-2-4 2-4-3Z" fill="#fff" />{tri}</svg> },
  { key: 'pie', node: <svg width="21" height="21" viewBox="0 0 21 21" fill="#d2d2d2"><path d="M9 3v9h9a9 9 0 1 1-9-9Z" /><path d="M11 1a9 9 0 0 1 8 8h-8Z" />{tri}</svg> },
  { key: 'radar', node: <svg width="21" height="21" viewBox="0 0 21 21" fill="none" stroke="#9c9c9c" strokeWidth="1"><path d="M9 1l8 6-2 10H4L1 7ZM9 5l5 3-1.5 6H6L4.5 8ZM9 1v8M1 7l8 2 8-2M4 17l5-8 6 8" />{tri}</svg> },
  { key: 'scatter', node: <svg width="21" height="21" viewBox="0 0 21 21" fill="#d2d2d2"><circle cx="12" cy="4" r="3.2" /><circle cx="4" cy="7" r="2.6" /><circle cx="8" cy="11" r="1.8" /><circle cx="4" cy="15" r="1.6" /><circle cx="14" cy="13" r="1" />{tri}</svg> },
  { key: 'tree', node: <svg width="21" height="21" viewBox="0 0 21 21" fill="#d2d2d2"><rect x="1" y="1" width="8" height="17" /><rect x="10" y="1" width="8" height="9" /><rect x="10" y="11" width="8" height="7" fill="#a9a9a9" />{tri}</svg> },
  { key: 'gauge', node: <svg width="21" height="21" viewBox="0 0 21 21" fill="none" stroke="#d2d2d2" strokeWidth="2"><path d="M2 15a8 8 0 0 1 16 0M9 8l2 6" />{tri}</svg> },
  { key: 'globe', node: <svg width="21" height="21" viewBox="0 0 21 21" fill="#d2d2d2"><circle cx="9.5" cy="9.5" r="8.5" /><path d="M1 7h17M1 12h17M9.5 1c-5 5-5 12 0 17M9.5 1c5 5 5 12 0 17" stroke="#464646" fill="none" />{tri}</svg> },
  { key: 'custom', node: <svg width="21" height="21" viewBox="0 0 21 21" fill="none" stroke="#c2c2c2" strokeWidth="1.2"><path d="M1 16V2h16v8" /><path d="M1 17l4-6 3 3 1 3H1Z" fill="#c2c2c2" /><path d="M10 15l-2 2 2 2M15 15l2 2-2 2" /></svg> },
];

const tabs = [
  { name: 'Layout Cumulative Premium', w: 226, c: '#e36c00', kind: 'fx' },
  { name: 'Done! (1)', w: 115, c: '#53a710', kind: 'chart' },
  { name: 'Discovery1', w: 123, c: '#53a710', kind: 'chart' },
  { name: 'TEST', w: 88, c: '#e36c00', kind: 'fx' },
  { name: 'Discovery2', w: 124, c: '#53a710', kind: 'chart' },
  { name: 'Triangles', w: 113, c: '#f0a800', kind: 'db' },
  { name: 'Discovery3', w: 123, c: '#53a710', kind: 'chart' },
  { name: 'Selected Year', w: 140, c: '#e36c00', kind: 'fx' },
  { name: 'Selected Month', w: 128, c: '#e36c00', kind: 'fx' },
];

const dropSlim = [
  { name: 'Filters', icon: <FilterIcon /> },
  { name: 'Color', icon: <Dots s={14} /> },
  { name: 'Indicator', icon: <IndicatorIcon /> },
  { name: 'Size', icon: <SizeIcon /> },
  { name: 'Tooltip', icon: <TooltipIcon /> },
];

const pivot = [['1', '100'], ['2', '100'], ['3', '100'], ['4', '300'], ['5', '300'], ['6', '300']];

const Dots3 = () => (
  <Kebab>
    <i /><i /><i />
  </Kebab>
);

const App: React.FC = () => {
  return (
    <Page>
      <GlobalStyle />
      <Ribbon>
        <Logo>
          <svg width="102" height="102" viewBox="0 0 102 102">
            <path d="M50 22v57L15 59 36 36v13l-7 10 11 8V26Z" fill="#77797b" />
            <path d="M53 22l34 37-21 12v-7l10-6-14-15v31l-9 5Z" fill="#35aee2" />
          </svg>
        </Logo>
        <TileGrid>
          <Tile><Bars /></Tile>
          <Tile><Dots /></Tile>
          <Tile><SetSquare /></Tile>
          <Tile $on><GridTile /></Tile>
        </TileGrid>
        <Section $w={388}>
          <SectionBody>
            <Cluster $w={212} style={{ paddingLeft: 3 }}>
              <ClusterRow>
                <Combo $w={139}>Segoe UI<Caret $c="#999" /></Combo>
                <Combo $w={61}>15<Caret $c="#999" /></Combo>
              </ClusterRow>
              <ClusterRow>
                <BoldBtn>B</BoldBtn>
                <Cell $w={31}><Glyph $i $s={17} style={{ fontFamily: 'Liberation Serif, serif' }}>I</Glyph></Cell>
                <Cell $w={30}><Glyph $u $s={14}>U</Glyph></Cell>
                <Cell $w={38}><FontColor /></Cell>
                <Cell $w={10}><Caret /></Cell>
                <Cell $w={36}><FillColor /></Cell>
                <Cell $w={10}><Caret /></Cell>
              </ClusterRow>
            </Cluster>
            <VSep />
            <Cluster $w={66}>
              <ClusterRow>
                <Cell $w={33}><LetterSize up /></Cell>
                <Cell $w={33}><LetterSize /></Cell>
              </ClusterRow>
              <ClusterRow>
                <Cell $w={33}><RowHeight up /></Cell>
                <Cell $w={33}><RowHeight /></Cell>
              </ClusterRow>
            </Cluster>
            <VSep />
            <Cluster $w={100}>
              <ClusterRow>
                <Cell $w={36}><BorderGrid /></Cell>
                <Cell $w={16}><Caret $c="#e5e5e5" /></Cell>
                <Cell $w={36}><ClearFormat /></Cell>
              </ClusterRow>
              <ClusterRow>
                <Cell $w={40}><PencilBox /></Cell>
                <Cell $w={8}><Caret /></Cell>
                <Cell $w={34}><AlignBox /></Cell>
                <Cell $w={16}><Caret $c="#e5e5e5" /></Cell>
              </ClusterRow>
            </Cluster>
          </SectionBody>
          <SectionLabel>FORMAT ALL</SectionLabel>
        </Section>
        <Section>
          <SectionBody>
            <RibbonBtn $w={62}>
              <BtnIcon><FormatVisual /></BtnIcon>
              Format<br />Visual
            </RibbonBtn>
            <Gallery>
              <GalleryItems>
                <GalleryItem $w={95}>
                  <ThumbBox><ThumbStandard /></ThumbBox>Standard
                </GalleryItem>
                <GalleryItem $w={96}>
                  <ThumbBox><ThumbAccounting /></ThumbBox>Accounting
                </GalleryItem>
                <GalleryItem $on $w={98}>
                  <ThumbBox><ThumbStriped /></ThumbBox>Striped
                </GalleryItem>
              </GalleryItems>
              <GalleryScroll>
                <ScrollStep><Caret $c="#ddd" style={{ transform: 'rotate(180deg)' }} /></ScrollStep>
                <ScrollStep><Caret $c="#ddd" /></ScrollStep>
                <ScrollStep><Caret $c="#999" /></ScrollStep>
              </GalleryScroll>
            </Gallery>
            <RibbonBtn $w={84} $on>
              <BtnIcon><TotalFormat /></BtnIcon>
              Total<br />Formatting ▾
            </RibbonBtn>
            <RibbonBtn $w={66}>
              <BtnIcon><ColumnSizing /></BtnIcon>
              Column<br />Sizing ▾
            </RibbonBtn>
            <RibbonBtn $w={70}>
              <BtnIcon><AlternateRows /></BtnIcon>
              Alternate<br />Rows
            </RibbonBtn>
            <RibbonBtn $w={60}>
              <BtnIcon><MiniMap /></BtnIcon>
              Mini<br />Map
            </RibbonBtn>
            <RibbonBtn $w={58} $on style={{ marginLeft: 4 }}>
              <BtnIcon><ExpandIcons /></BtnIcon>
              Expand<br />Icons ▾
            </RibbonBtn>
            <SmallCol>
              <FitSmall />
              <ExpandSmall />
            </SmallCol>
            <RibbonBtn $w={88}>
              <BtnIcon><Alignment /></BtnIcon>
              Alignment ▾
            </RibbonBtn>
            <RibbonBtn $w={58}>
              <BtnIcon><Legend /></BtnIcon>
              Legend ▾
            </RibbonBtn>
          </SectionBody>
          <SectionLabel $w={924}>GRID FORMAT</SectionLabel>
          <Collapse><ChevronsUp size={20} strokeWidth={1.4} /></Collapse>
        </Section>
      </Ribbon>

      <Work>
        <LeftCol>
          <Panel $h={303}>
            <Handle $x={72} />
            <Handle $x={260} />
            <Tabs>
              <PanelTab $on>Dimensions<ChevronLeft size={18} strokeWidth={1.4} /></PanelTab>
              <PanelTab>Content<ChevronLeft size={18} strokeWidth={1.4} /></PanelTab>
            </Tabs>
            <ToolRow>
              <Cell $w={28}><Hier /></Cell>
              <Cell $w={18}><Caret $c="#e0e0e0" /></Cell>
              <Cell $w={22}><Briefcase /></Cell>
              <Push />
              <Cell $w={24}><Search size={16} color="#cfcfcf" /></Cell>
              <Cell $w={25}><RefreshCw size={15} color="#cfcfcf" /></Cell>
            </ToolRow>
            <Tree>
              <TreeRow>
                <Arrow><Caret $c="#fff" /></Arrow><Axes /> Date
              </TreeRow>
              <TreeRow $child><TimeDim /> Development Date</TreeRow>
              <TreeRow $child $blue><TimeDim /> Development Month</TreeRow>
              <TreeRow $child $blue><TimeDim /> Underwriting Year</TreeRow>
              <TreeRow>
                <Arrow><RightArrow /></Arrow><Axes /> Facts
              </TreeRow>
            </Tree>
          </Panel>
          <Splitter />
          <Panel $h={241}>
            <Handle $x={72} />
            <Handle $x={260} />
            <Tabs>
              <PanelTab>Measures<ChevronLeft size={18} strokeWidth={1.4} /></PanelTab>
              <PanelTab $on>Elements<ChevronLeft size={18} strokeWidth={1.4} /></PanelTab>
            </Tabs>
            <ToolRow>
              <Cell $w={26}><BoxX /></Cell>
              <Cell $w={26}><Fx $s={19}>fx</Fx></Cell>
              <Cell $w={20}><Caret $c="#d8d8d8" /></Cell>
              <Push />
              <Cell $w={24}><FxFolder /></Cell>
              <Cell $w={18}><Caret $c="#d8d8d8" /></Cell>
              <Cell $w={26}><DashX /></Cell>
              <Cell $w={26}><Search size={16} color="#cfcfcf" /></Cell>
              <Cell $w={18}><Caret $c="#d8d8d8" /></Cell>
              <Cell $w={24}><RefreshCw size={15} color="#cfcfcf" /></Cell>
            </ToolRow>
            <ListHead>
              <Check />
              Development Month
            </ListHead>
            <ListBody>
              {['1', '2', '3', '4', '5', ''].map(n => (
                <ListRow key={n || 'next'}>
                  <Check />
                  <Member />
                  {n}
                </ListRow>
              ))}
              <ScrollThumb />
            </ListBody>
          </Panel>
          <SplitBar />
          <SavedPanel>
            <SavedRow>
              <Check><CheckMark /></Check>
              <FieldList />
              Development Month Range
              <SavedOwner>- Ian.Macdonald ...</SavedOwner>
            </SavedRow>
          </SavedPanel>
        </LeftCol>

        <DropPanel>
          <Handle $x={98} />
          <DropHead>
            Drop Zones
            <Push />
            <Cell $w={24}><Glyph $u={false} $c="#d8d8d8" $s={16} style={{ fontWeight: 700 }}>?</Glyph></Cell>
            <ChevronLeft size={18} strokeWidth={1.4} color="#ccc" />
          </DropHead>
          <DropList>
            <DropBox $tall>
              <DropTitle $tall>
                <DropIcon style={{ marginLeft: -7 }}><ColumnsIcon /></DropIcon>Columns<Dots3 />
              </DropTitle>
              <Pill style={{ marginLeft: 0 }}>
                <PillIcon><TimeDim c="#dce8f2" /></PillIcon>
                <PillText>Underwriting Year</PillText>
                <X size={14} strokeWidth={2} color="#fff" />
              </Pill>
            </DropBox>
            <DropBox $tall>
              <DropTitle $tall>
                <DropIcon style={{ marginLeft: -7 }}><RowsIcon /></DropIcon>Rows<Dots3 />
              </DropTitle>
              <Pill>
                <PillIcon><TimeDim c="#dce8f2" /></PillIcon>
                <PillText>Development Month</PillText>
                <X size={14} strokeWidth={2} color="#fff" />
              </Pill>
            </DropBox>
            <DropBox $tall>
              <DropTitle $tall>
                <DropIcon style={{ marginLeft: -7 }}><ValuesIcon /></DropIcon>Values<Dots3 />
              </DropTitle>
              <Pill $orange>
                <PillIcon $orange><Bars c="#fff" s={13} /></PillIcon>
                <PillText>Layout Cumulative Pre...</PillText>
                <X size={14} strokeWidth={2} color="#fff" />
              </Pill>
            </DropBox>
            {dropSlim.map(d => (
              <DropBox key={d.name}>
                <DropTitle>
                  <DropIcon style={{ marginLeft: -7 }}>{d.icon}</DropIcon>{d.name}<Dots3 />
                </DropTitle>
              </DropBox>
            ))}
          </DropList>
        </DropPanel>

        <Main>
          <MainHead>
            <Crumb>
              <Info />
              In-Memory DB \ More Triangles \ More Triangles Model
            </Crumb>
            <HeadDone>Done!</HeadDone>
            <HeadTools>
              <HeadBtn><ArrowLeft size={20} strokeWidth={1.8} /></HeadBtn>
              <HeadBtn $dim><ArrowRight size={20} strokeWidth={1.8} /></HeadBtn>
              <HeadBtn><Save /></HeadBtn>
              <HeadBtn><Rss /></HeadBtn>
              <HeadBtn><PrintIcon /></HeadBtn>
              <HeadBtn>?</HeadBtn>
              <HeadBtn><X size={20} strokeWidth={1.2} /></HeadBtn>
            </HeadTools>
          </MainHead>
          <MainBody>
            <VTools>
              {vIcons.map(v =>
                v.key === 'divider' ? (
                  <VDivider key={v.key} />
                ) : (
                  <VBtn key={v.key} $on={v.on}>{v.node}</VBtn>
                ),
              )}
            </VTools>
            <Canvas>
              <FilterBar>
                <TimeDim c="#7fb2d6" />
                <FilterLabel>Entered Date</FilterLabel>
                <DateSelect>2024-06-29<BlackCaret /></DateSelect>
                <GreyKebab><i /><i /><i /></GreyKebab>
              </FilterBar>
              <ReportTitle>Layout Cumulative Premium by Underwriting Year and Development Month</ReportTitle>
              <PivotTable>
                <PivotHead>Development<br />Month</PivotHead>
                <PivotHead $dark>2024</PivotHead>
                {pivot.map(([m, v]) => (
                  <React.Fragment key={m}>
                    <PivotCell>{m}</PivotCell>
                    <PivotCell $value>{v}</PivotCell>
                  </React.Fragment>
                ))}
              </PivotTable>
              <Pointer>
                <svg width="13" height="20" viewBox="0 0 13 20" fill="#fff" stroke="#333" strokeWidth="1">
                  <path d="M1 1v15l4-3.5 2.5 6 2.5-1-2.5-6h5Z" />
                </svg>
              </Pointer>
            </Canvas>
          </MainBody>
        </Main>

        <SidePanel>
          <ChevronLeft size={18} strokeWidth={1.4} color="#ccc" />
          <SideText>Formatting Panel</SideText>
        </SidePanel>
      </Work>

      <Footer>
        <FootLeft>
          <Cell $w={46} style={{ paddingLeft: 0 }}>
            <svg width="16" height="14" viewBox="0 0 16 14" fill="#c8c8c8"><rect width="16" height="2.4" /><rect y="5.5" width="16" height="2.4" /><rect y="11" width="16" height="2.4" /></svg>
          </Cell>
          <Cell $w={34}>
            <svg width="19" height="17" viewBox="0 0 19 17" fill="none"><path d="M1 15V1h5l2 2h7v4" stroke="#b5b5b5" strokeWidth="1.4" fill="#8a8a8a" /><circle cx="12" cy="10" r="4.5" stroke="#d0d0d0" strokeWidth="1.4" /><path d="M8 14l-3 3" stroke="#d0d0d0" strokeWidth="1.5" /></svg>
          </Cell>
          <Cell $w={28}>
            <svg width="18" height="18" viewBox="0 0 18 18" fill="none" stroke="#bdbdbd" strokeWidth="1.2"><path d="M3 1h12v9H3ZM1 12h16v5H1ZM7 3l4 4M11 3L7 7" /></svg>
          </Cell>
          <Cell $w={26} style={{ marginLeft: 14 }}>
            <svg width="14" height="14" viewBox="0 0 14 14" fill="#c8c8c8"><rect width="1.5" height="14" /><path d="M13 0v14L3 7Z" /></svg>
          </Cell>
          <Cell $w={20}>
            <svg width="11" height="14" viewBox="0 0 11 14" fill="#c8c8c8"><path d="M11 0v14L0 7Z" /></svg>
          </Cell>
        </FootLeft>
        <ActiveTab>
          <Star $bright>*</Star>
          <Bars s={14} />
          Done!
          <Push />
          <Caret $c="#fff" style={{ borderLeftWidth: 6, borderRightWidth: 6, borderTopWidth: 8 }} />
        </ActiveTab>
        <FootRest>
          <SheetTabs>
            {tabs.map((t, i) => (
              <SheetTab key={t.name} $w={t.w} $c={t.c} $clip={i === tabs.length - 1}>
                {t.kind === 'chart' && <Star>*</Star>}
                {t.kind === 'chart' && <Bars s={14} />}
                {t.kind === 'fx' && <Fx>fx</Fx>}
                {t.kind === 'db' && (
                  <svg width="13" height="14" viewBox="0 0 13 14" fill="#f0b429"><ellipse cx="6.5" cy="2.5" rx="6" ry="2.2" /><path d="M0.5 4.5c1 2 11 2 12 0v3c-1 2-11 2-12 0ZM0.5 9c1 2 11 2 12 0v2.5c-1 2.6-11 2.6-12 0Z" /></svg>
                )}
                {t.name}
              </SheetTab>
            ))}
          </SheetTabs>
          <FootTools>
            <Cell $w={40}>
              <svg width="16" height="16" viewBox="0 0 16 16" fill="#d8d8d8"><rect x="7" width="2.4" height="16" /><rect y="7" width="16" height="2.4" /></svg>
            </Cell>
            <Cell $w={14}>
              <svg width="11" height="14" viewBox="0 0 11 14" fill="#c8c8c8"><path d="M0 0v14l11-7Z" /></svg>
            </Cell>
            <Cell $w={28}>
              <svg width="14" height="14" viewBox="0 0 14 14" fill="#c8c8c8"><path d="M0 0v14l11-7Z" /><rect x="12.5" width="1.5" height="14" /></svg>
            </Cell>
            <Cell $w={14} />
            <Cell $w={28}>
              <svg width="18" height="20" viewBox="0 0 18 20" fill="none" stroke="#b0b0b0" strokeWidth="1"><path d="M9 0L1 10l8 10 8-10ZM9 0v20M5 5v10M13 5v10M1 10h16" /></svg>
            </Cell>
            <Cell $w={7} />
            <Cell $w={28}>
              <svg width="18" height="20" viewBox="0 0 18 20" fill="none" stroke="#c4c4c4" strokeWidth="1.3"><path d="M6 1l11 5-5 2 3 9-4 2-3-9-6 2Z" /></svg>
            </Cell>
            <Cell $w={12}><Caret $c="#d0d0d0" /></Cell>
            <Cell $w={4} />
            <Cell $w={28}>
              <svg width="18" height="20" viewBox="0 0 18 20" fill="none"><path d="M13 3a8 8 0 1 0-6 15M7 15a5 5 0 1 1 5-8" stroke="#c4c4c4" strokeWidth="1.4" /><rect x="11" y="12" width="7" height="8" fill="#42b21a" /></svg>
            </Cell>
            <Cell $w={2} />
            <Cell $w={28}>
              <svg width="20" height="22" viewBox="0 0 20 22" fill="none" stroke="#c4c4c4" strokeWidth="1.3"><circle cx="10" cy="12" r="8.5" /><path d="M10 7v5h4M7 1h6" /></svg>
            </Cell>
          </FootTools>
        </FootRest>
      </Footer>
    </Page>
  );
};

export default App;
